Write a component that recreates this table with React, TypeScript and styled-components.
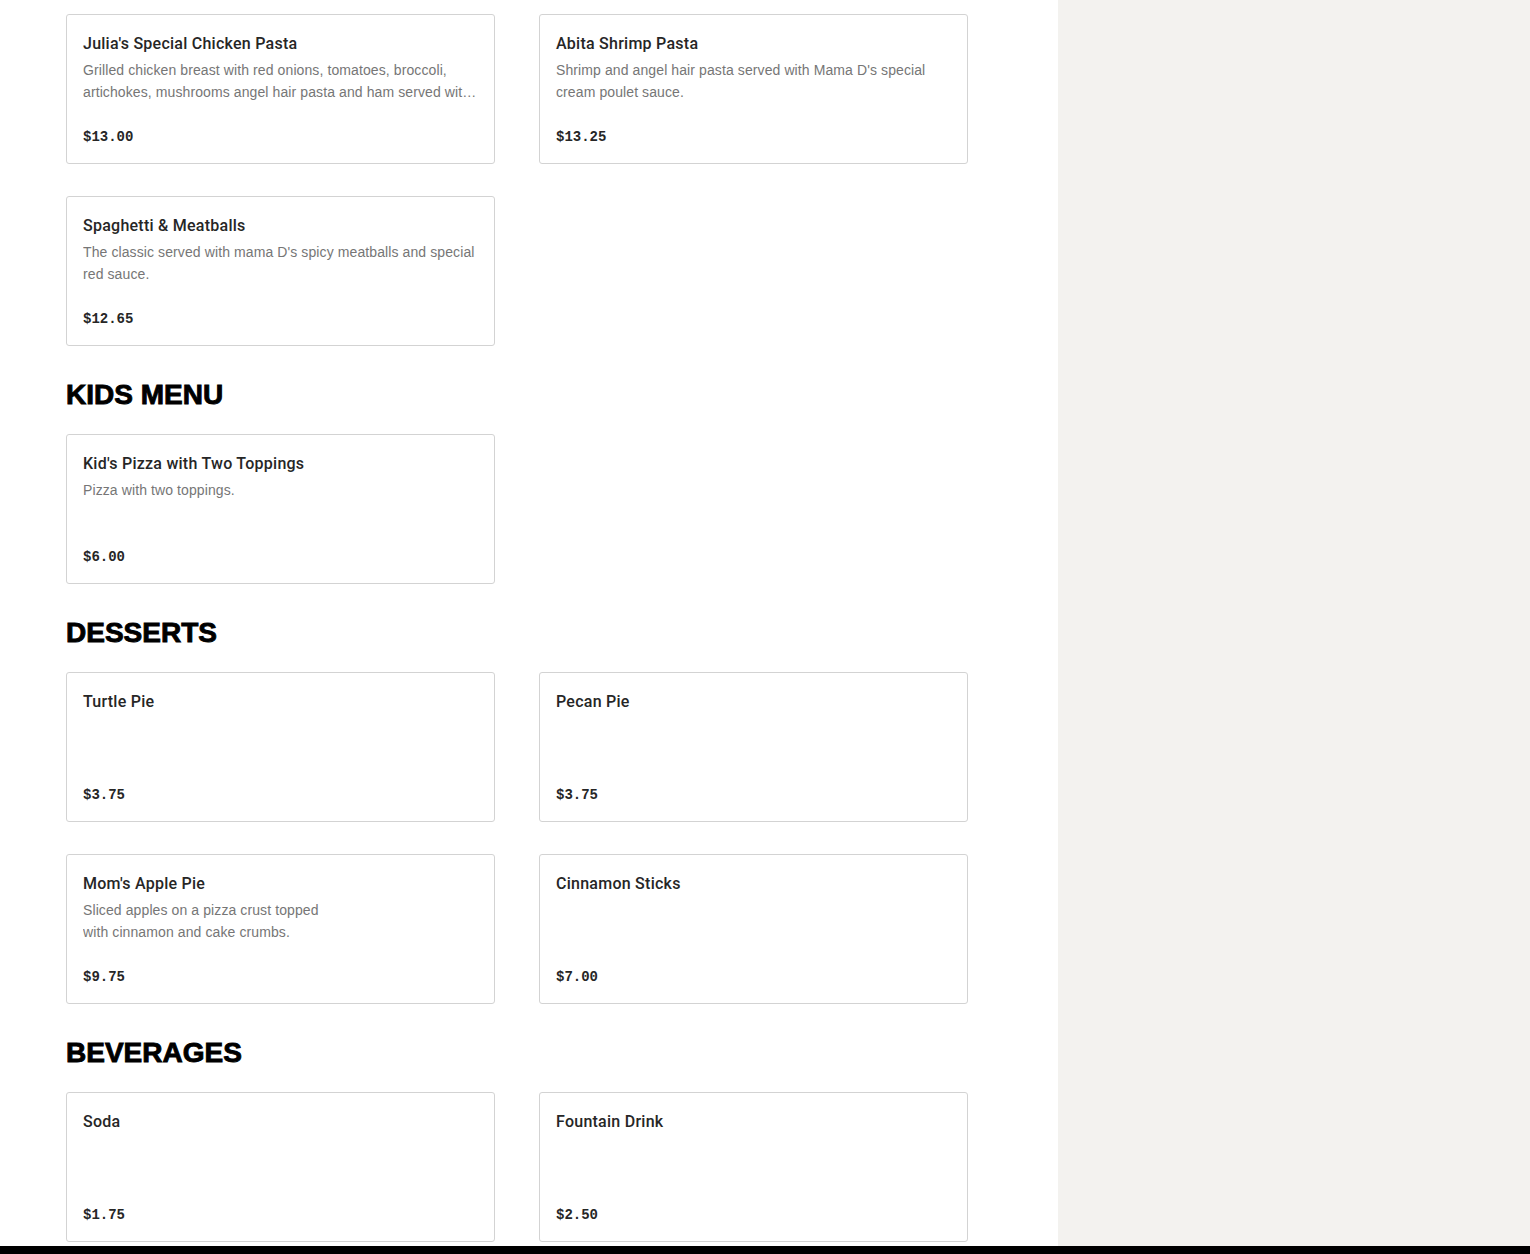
import { createGlobalStyle, styled } from 'styled-components';

type MenuItem = {
  name: string,
  description?: string,
  price: string
}

type MenuSection = {
  title?: string,
  items: MenuItem[]
}

const sections: MenuSection[] = [
  {
    items: [
      {
        name: "Julia's Special Chicken Pasta",
        description: 'Grilled chicken breast with red onions, tomatoes, broccoli, artichokes, mushrooms angel hair pasta and ham served with our special cream sauce.',
        price: '$13.00'
      },
      {
        name: 'Abita Shrimp Pasta',
        description: "Shrimp and angel hair pasta served with Mama D's special cream poulet sauce.",
        price: '$13.25'
      },
      {
        name: 'Spaghetti & Meatballs',
        description: "The classic served with mama D's spicy meatballs and special red sauce.",
        price: '$12.65'
      }
    ]
  },
  {
    title: 'KIDS MENU',
    items: [
      { name: "Kid's Pizza with Two Toppings", description: 'Pizza with two toppings.', price: '$6.00' }
    ]
  },
  {
    title: 'DESSERTS',
    items: [
      { name: 'Turtle Pie', price: '$3.75' },
      { name: 'Pecan Pie', price: '$3.75' },
      {
        name: "Mom's Apple Pie",
        description: 'Sliced apples on a pizza crust topped\nwith cinnamon and cake crumbs.',
        price: '$9.75'
      },
      { name: 'Cinnamon Sticks', price: '$7.00' }
    ]
  },
  {
    title: 'BEVERAGES',
    items: [
      { name: 'Soda', price: '$1.75' },
      { name: 'Fountain Drink', price: '$2.50' }
    ]
  }
];

const GlobalStyle = createGlobalStyle`
  html, body {
    margin: 0;
    padding: 0;
    background: #ffffff;
  }
  body {
    font-family: "Liberation Sans", Arial, sans-serif;
    color: #222222;
  }
`;

export default function App() {
  return (
    <>
      <GlobalStyle />
      <Page>
        <Main>
          {sections.map((section, i) => (
            <Section key={i}>
              {section.title && <SectionTitle>{section.title}</SectionTitle>}
              <Grid>
                {section.items.map((item) => (
                  <Card key={item.name}>
                    <ItemName>{item.name}</ItemName>
                    {item.description && <Description>{item.description}</Description>}
                    <Price>{item.price}</Price>
                  </Card>
                ))}
              </Grid>
            </Section>
          ))}
        </Main>
        <Aside />
      </Page>
      <BottomBar />
    </>
  );
}

const Page = styled.div`
  display: flex;
  min-height: 1254px;
`;

const Main = styled.main`
  width: 1058px;
  flex-shrink: 0;
  box-sizing: border-box;
  padding: 14px 90px 40px 66px;
  background: #ffffff;
`;

const Aside = styled.aside`
  flex: 1;
  background: #f3f2ef;
`;

const Section = styled.section`
  display: flex;
  flex-direction: column;
`;

const SectionTitle = styled.h2`
  margin: 33px 0 23px;
  font-family: "Liberation Sans", Arial, sans-serif;
  font-size: 28px;
  line-height: 32px;
  font-weight: 700;
  letter-spacing: 0;
  color: #000000;
  -webkit-text-stroke: 0.9px #000000;
`;

const Grid = styled.div`
  display: grid;
  grid-template-columns: 429px 429px;
  column-gap: 44px;
  row-gap: 32px;
`;

const Card = styled.div`
  display: flex;
  flex-direction: column;
  box-sizing: border-box;
  height: 150px;
  padding: 17px 16px 15px;
  border: 1px solid #d3d3d3;
  border-radius: 3px;
  background: #ffffff;
`;

const ItemName = styled.h3`
  margin: 0;
  font-family: Roboto, "Liberation Sans", Arial, sans-serif;
  font-size: 16px;
  line-height: 24px;
  font-weight: 500;
  color: #262626;
  letter-spacing: 0.25px;
`;

const Description = styled.p`
  margin: 3px 0 0;
  font-size: 14px;
  line-height: 22px;
  letter-spacing: 0.1px;
  color: #767676;
  white-space: pre-line;
  display: -webkit-box;
  -webkit-line-clamp: 2;
  -webkit-box-orient: vertical;
  overflow: hidden;
`;

const Price = styled.span`
  margin-top: auto;
  font-family: "Liberation Mono", "Courier New", monospace;
  font-size: 14px;
  line-height: 22px;
  font-weight: 700;
  color: #262626;
`;

const BottomBar = styled.div`
  position: fixed;
  left: 0;
  right: 0;
  bottom: 0;
  height: 8px;
  background: #000000;
`;
